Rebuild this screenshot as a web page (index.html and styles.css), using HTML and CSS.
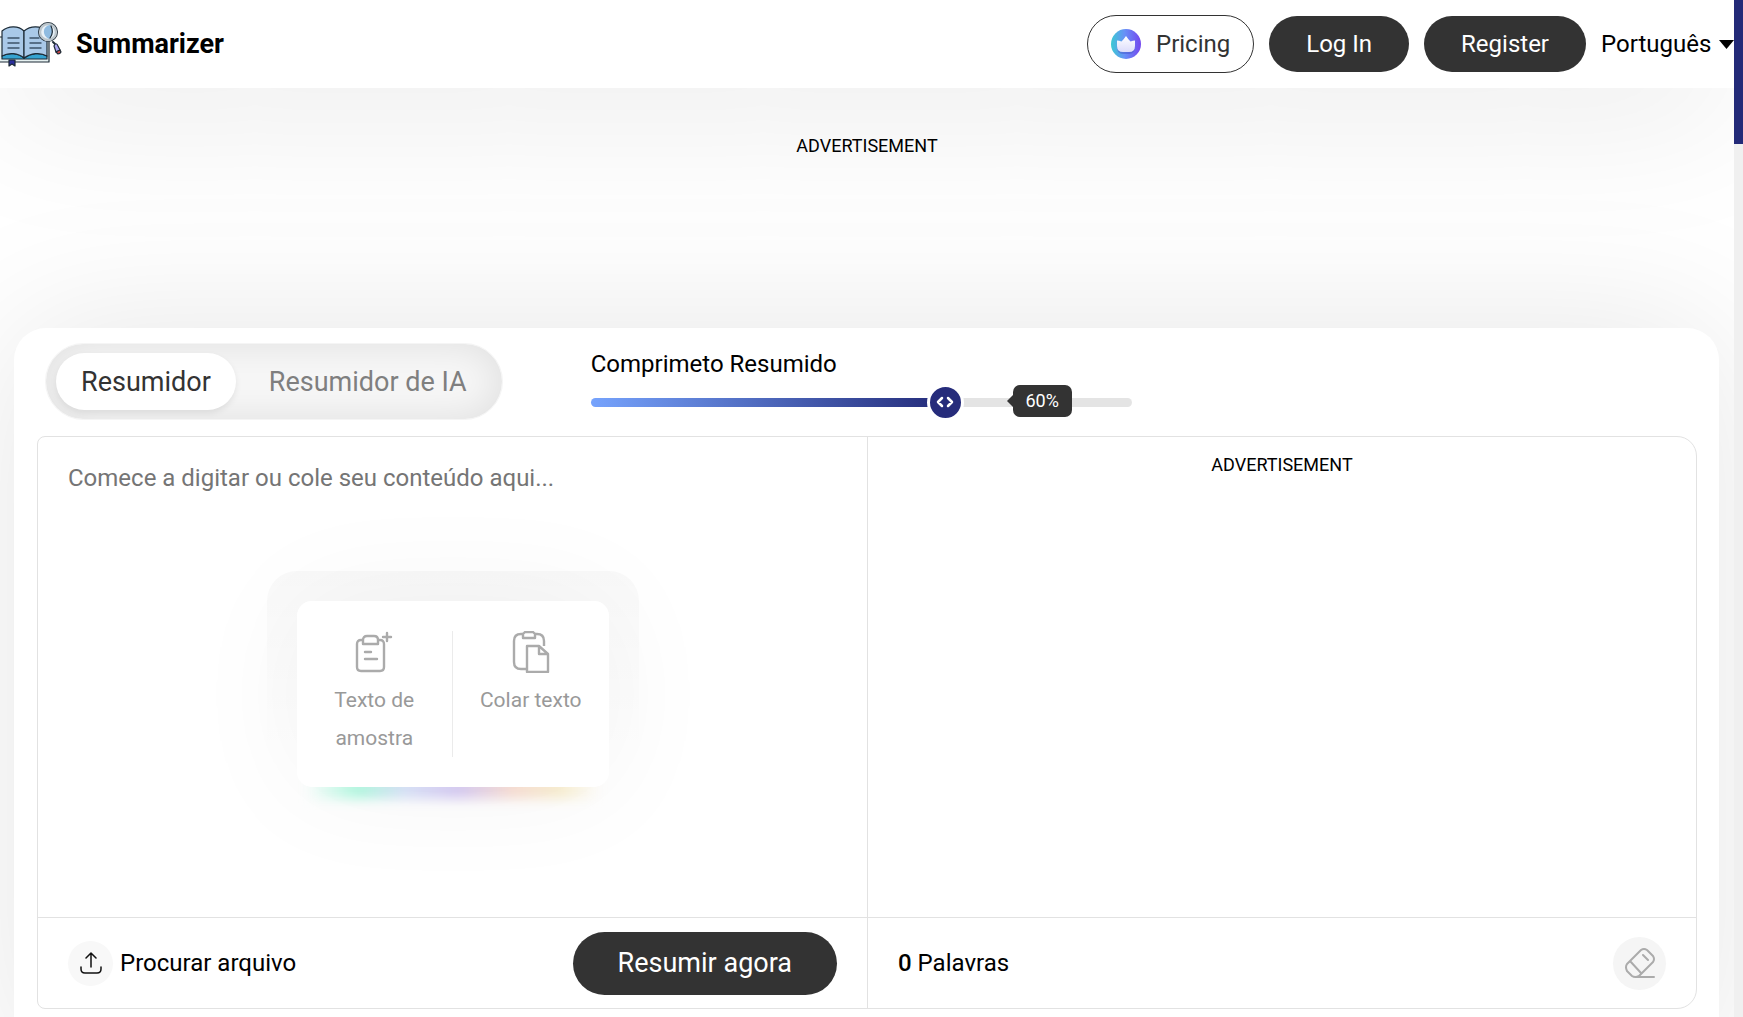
FILE: index.html
```html
<!DOCTYPE html>
<html lang="pt">

<head>
    <meta charset="UTF-8">
    <meta name="viewport" content="width=device-width, initial-scale=1.0">
    <title>Summarizer</title>
    <link rel="stylesheet" href="styles.css">
</head>

<body>
    <div class="page">
        <header class="header">
            <a href="#" class="brand">
                <svg class="logo" viewBox="0 0 62 48" width="62" height="48" fill="none" stroke="#1d2b36" stroke-width="1.2" stroke-linejoin="round" stroke-linecap="round" aria-hidden="true">
                    <path d="M-2 17H49V42H-2Z" fill="#e6f1f1" />
                    <path d="M2 36C9 32 18 33 24 38C31 33 40 32 47 36V39H2Z" fill="#35a3d0" />
                    <path d="M2 11C8 6 18 5 24 11V38C18 33 9 32 2 36Z" fill="#a9c9e8" />
                    <path d="M47 11C41 6 31 5 24 11V38C31 33 40 32 47 36Z" fill="#a9c9e8" />
                    <path d="M8 18H19M8 23H19M8 28H19M30 18H39M30 23H41M30 28H41" stroke="#3c5368" stroke-width="1.4" />
                    <path d="M9 40H15V46L12 44L9 46Z" fill="#2c2f9e" />
                    <circle cx="48" cy="12" r="8" fill="#dcebf5" stroke="#1d2b36" stroke-width="4" />
                    <circle cx="48" cy="12" r="8" fill="#e8f1f8" stroke="#bcc6cc" stroke-width="2.4" />
                    <path d="M50 5C42 6 42 16 49 19C53 15 53 9 50 5Z" fill="#8fbbe0" stroke="none" />
                    <path d="M51 6C53 10 53 14 50 18" />
                    <path d="M53 22L55 24" stroke-width="2" />
                    <path d="M54 26C55 23 57 23 58 26L60 30L56 32Z" fill="#aaa5ef" />
                    <path d="M56 32L60 30L61 32C60 34 59 34 58 34Z" fill="#d14848" />
                </svg>
                <span class="brand-name">Summarizer</span>
            </a>
            <nav class="nav">
                <a href="#" class="pricing">
                    <svg viewBox="0 0 30 30" width="30" height="30" aria-hidden="true">
                        <defs>
                            <linearGradient id="disc" x1="0" y1="0" x2="1" y2="0">
                                <stop offset="0" stop-color="#3cc9d3" />
                                <stop offset="0.45" stop-color="#6791f7" />
                                <stop offset="1" stop-color="#7345ee" />
                            </linearGradient>
                            <linearGradient id="crown" x1="0" y1="0" x2="0" y2="1">
                                <stop offset="0" stop-color="#ffffff" />
                                <stop offset="1" stop-color="#dcdcfb" />
                            </linearGradient>
                        </defs>
                        <circle cx="15" cy="15" r="15" fill="url(#disc)" />
                        <path d="M6 14L10 16L15 10L20 16L24 14V18Q24 25 18 25H12Q6 25 6 18Z" fill="#4658c9" opacity="0.5" />
                        <path d="M6 11.500Q8 11.500 10.500 12.500Q13 10 15 7Q17 10 19.500 12.500Q22 11.500 24 11.500V17Q24 23 18 23H12Q6 23 6 17Z" fill="url(#crown)" />
                    </svg>
                    Pricing
                </a>
                <a href="#" class="btn">Log In</a>
                <a href="#" class="btn">Register</a>
                <select class="language" aria-label="Idioma">
                    <option>Português</option>
                    <option>English</option>
                    <option>Español</option>
                </select>
            </nav>
        </header>

        <div class="ad ad-top">ADVERTISEMENT</div>

        <main class="tool">
            <div class="toolbar">
                <div class="tabs">
                    <button type="button" class="tab active">Resumidor</button>
                    <button type="button" class="tab">Resumidor de IA</button>
                </div>
                <div class="length">
                    <label for="length">Comprimeto Resumido</label>
                    <div class="slider">
                        <input type="range" id="length" min="20" max="80" value="60">
                        <output class="bubble" for="length">60%</output>
                    </div>
                </div>
            </div>

            <div class="panel">
                <section class="column">
                    <div class="workspace">
                        <textarea class="editor" aria-label="Texto" placeholder="Comece a digitar ou cole seu conteúdo aqui..."></textarea>
                        <div class="starter">
                            <div class="starter-card">
                                <button type="button" class="starter-btn">
                                    <svg viewBox="0 0 42 42" width="42" height="42" fill="none" stroke="#ababab" stroke-width="2.4" stroke-linecap="round" stroke-linejoin="round" aria-hidden="true">
                                        <path d="M9 9H8Q4 9 4 13V36Q4 40 8 40H27Q31 40 31 36V13Q31 9 27 9H26" />
                                        <path d="M10 13V9Q10 5 14 5H21Q25 5 25 9V13Z" />
                                        <path d="M12 21H18M12 28H24M34 2V10M30 6H38" />
                                    </svg>
                                    Texto de amostra
                                </button>
                                <button type="button" class="starter-btn">
                                    <svg viewBox="0 0 42 42" width="42" height="42" fill="none" stroke="#ababab" stroke-width="2.4" stroke-linejoin="round" aria-hidden="true">
                                        <path d="M13 3H11Q4 3 4 10V31Q4 38 11 38H17M25 3H27Q34 3 34 10V15" />
                                        <path d="M15 1H23L25 3V7H13V3Z" />
                                        <path d="M17 15H29L38 23V41H17ZM29 15V23H38" />
                                    </svg>
                                    Colar texto
                                </button>
                            </div>
                        </div>
                    </div>
                    <div class="actions">
                        <button type="button" class="upload">
                            <span class="upload-icon">
                                <svg viewBox="0 0 22 22" width="22" height="22" fill="none" stroke="#111" stroke-width="1.500" stroke-linecap="round" stroke-linejoin="round" aria-hidden="true">
                                    <path d="M11 15V1M6 6L11 1L16 6M1 15V17Q1 21 5 21H17Q21 21 21 17V15" />
                                </svg>
                            </span>
                            Procurar arquivo
                        </button>
                        <button type="button" class="btn submit">Resumir agora</button>
                    </div>
                </section>

                <section class="column">
                    <div class="workspace ad ad-result">ADVERTISEMENT</div>
                    <div class="actions">
                        <p class="count"><b>0</b> Palavras</p>
                        <button type="button" class="erase" aria-label="Apagar">
                            <svg viewBox="0 0 32 32" width="32" height="32" fill="none" stroke="#ababab" stroke-width="2" stroke-linecap="round" stroke-linejoin="round" aria-hidden="true">
                                <path d="M17 3Q20 1 23 3L29 9Q31 12 29 15L15 29Q11 31 8 29L3 24Q1 20 3 17ZM6 14L17 26M19 8L24 13M12 30H30" />
                            </svg>
                        </button>
                    </div>
                </section>
            </div>
        </main>
    </div>
    <div class="scrollbar" aria-hidden="true">
        <div class="scrollbar-thumb"></div>
    </div>
</body>

</html>
```
FILE: styles.css
```css
* {
    margin: 0;
    padding: 0;
    box-sizing: border-box;
}

body {
    display: flex;
    height: 100vh;
    overflow: hidden;
    background: #fff;
    color: #000;
    font-family: Roboto, "Liberation Sans", sans-serif;
    font-size: 24px;
}

a {
    color: inherit;
    text-decoration: none;
}

button,
select,
textarea {
    border: 0;
    background: none;
    color: inherit;
    font: inherit;
}

button {
    cursor: pointer;
}

.page {
    flex: 1;
    min-width: 0;
    overflow: hidden;
}

/* fake scrollbar */
.scrollbar {
    flex: none;
    width: 9px;
    background: #f0f0f0;
}

.scrollbar-thumb {
    height: 144px;
    background: #232a78;
}

/* header */
.header {
    position: relative;
    z-index: 1;
    display: flex;
    align-items: center;
    justify-content: space-between;
    height: 88px;
    background: #fff;
    box-shadow: 0 20px 150px rgba(0, 0, 0, 0.1);
}

.brand {
    display: flex;
    align-items: center;
    gap: 14px;
}

.brand-name {
    font-size: 27px;
    font-weight: 700;
}

.nav {
    display: flex;
    align-items: center;
    gap: 15px;
}

.pricing {
    display: flex;
    align-items: center;
    gap: 15px;
    height: 58px;
    padding: 0 23px;
    border: 1px solid #333;
    border-radius: 29px;
    color: #333;
}

.btn {
    height: 56px;
    padding: 0 37px;
    border-radius: 28px;
    background: #333;
    color: #fff;
    line-height: 56px;
}

.language {
    width: 133px;
    appearance: none;
    background: url("data:image/svg+xml,%3Csvg xmlns='http://www.w3.org/2000/svg' width='15' height='9'%3E%3Cpath d='M0 0H15L7.500 9Z'/%3E%3C/svg%3E") no-repeat right center;
}

/* ads */
.ad {
    font-size: 18px;
    line-height: 24px;
    text-align: center;
}

.ad-top {
    height: 240px;
    padding-top: 46px;
}

.ad-result {
    padding-top: 16px;
}

/* tool */
.tool {
    margin: 0 15px 0 14px;
    padding: 15px 22px 60px 23px;
    border-radius: 32px 32px 0 0;
    background: #fff;
    box-shadow: 0 0 150px rgba(0, 0, 0, 0.1);
}

.toolbar {
    display: flex;
    gap: 88px;
    margin: 0 0 12px 8px;
}

.tabs {
    display: flex;
    align-items: center;
    height: 77px;
    padding: 0 10px;
    border: 1px solid #f5f5f5;
    border-radius: 39px;
    background: #f7f7f7;
    box-shadow: inset 0 0 40px rgba(0, 0, 0, 0.1);
}

.tab {
    height: 57px;
    padding: 0 25px;
    border-radius: 29px;
    color: #7f7f7f;
    font-size: 27px;
}

.tab + .tab {
    margin-left: 8px;
}

.tab.active {
    background: #fff;
    box-shadow: 0 3px 6px rgba(0, 0, 0, 0.08);
    color: #333;
}

.length {
    width: 541px;
    padding-top: 5px;
}

.length label {
    display: block;
    line-height: 32px;
}

.slider {
    display: flex;
    align-items: center;
    position: relative;
    height: 44px;
}

.slider input {
    width: 100%;
    height: 9px;
    appearance: none;
    border-radius: 5px;
    background: linear-gradient(to right, #76a3fd, #232a78 66%, #e4e4e4 66%);
}

.slider input::-webkit-slider-thumb {
    width: 37px;
    height: 37px;
    appearance: none;
    border: 3px solid #fff;
    border-radius: 50%;
    background: #262c7b url("data:image/svg+xml,%3Csvg xmlns='http://www.w3.org/2000/svg' width='18' height='12' fill='none' stroke='white' stroke-width='2.500' stroke-linecap='round' stroke-linejoin='round'%3E%3Cpath d='M6 2L2 6L6 10M12 2L16 6L12 10'/%3E%3C/svg%3E") no-repeat center;
}

/* sits on top of the track, right of the thumb */
.bubble {
    position: absolute;
    left: 78%;
    top: 5px;
    width: 59px;
    border-radius: 7px;
    background: #333;
    color: #fff;
    font-size: 18px;
    line-height: 32px;
    text-align: center;
}

.bubble::before {
    content: "";
    position: absolute;
    right: 100%;
    top: 10px;
    border: 6px solid transparent;
    border-left: 0;
    border-right-color: #333;
}

.panel {
    display: grid;
    grid-template-columns: 1fr 1fr;
    border: 1px solid #e2e2e2;
    border-radius: 8px 20px 20px 8px;
}

.column + .column {
    border-left: 1px solid #e2e2e2;
}

.workspace {
    display: grid;
    height: 480px;
}

.editor {
    grid-area: 1 / 1;
    padding: 24px 30px;
    line-height: 34px;
    outline: 0;
    resize: none;
}

.editor::placeholder {
    color: #757575;
}

.starter {
    position: relative;
    z-index: 0;
    grid-area: 1 / 1;
    place-self: start center;
    margin-top: 134px;
    padding: 30px;
    border-radius: 30px;
    background: linear-gradient(rgba(0, 0, 0, 0.024), transparent 75%);
}

.starter-card {
    position: relative;
    display: flex;
    width: 312px;
    padding: 30px 0;
    border-radius: 15px;
    background: #fff;
    box-shadow: 0 0 120px rgba(0, 0, 0, 0.05);
}

/* coloured glow under the card */
.starter-card::before {
    content: "";
    position: absolute;
    z-index: -1;
    left: 8px;
    right: 8px;
    bottom: -12px;
    height: 22px;
    background: linear-gradient(to right, #fff, #b4fae2 18%, #dbe4fa 34%, #d9cdf5 52%, #fae0d6 70%, #faf0d2 86%, #fff);
    filter: blur(6px);
}

.starter-card::after {
    content: "";
    position: absolute;
    inset: 0;
    z-index: -1;
    border-radius: 15px;
    background: #fff;
}

.starter-btn {
    display: flex;
    flex: 1;
    flex-direction: column;
    align-items: center;
    gap: 8px;
    padding: 0 25px;
    color: #999;
    font-size: 21px;
    line-height: 38px;
}

.starter-btn + .starter-btn {
    border-left: 1px solid #ebebeb;
}

.actions {
    display: flex;
    align-items: center;
    justify-content: space-between;
    height: 91px;
    padding: 0 30px;
    border-top: 1px solid #e2e2e2;
}

.upload {
    display: flex;
    align-items: center;
    gap: 7px;
}

.upload-icon {
    display: grid;
    place-items: center;
    width: 45px;
    height: 45px;
    border-radius: 50%;
    background: #f8f8f8;
}

.submit {
    height: 63px;
    padding: 0 45px;
    border-radius: 32px;
    font-size: 27px;
    line-height: 63px;
}

.count b {
    font-weight: 500;
}

.erase {
    display: grid;
    place-items: center;
    width: 53px;
    height: 53px;
    border-radius: 50%;
    background: #f5f5f5;
}
```
